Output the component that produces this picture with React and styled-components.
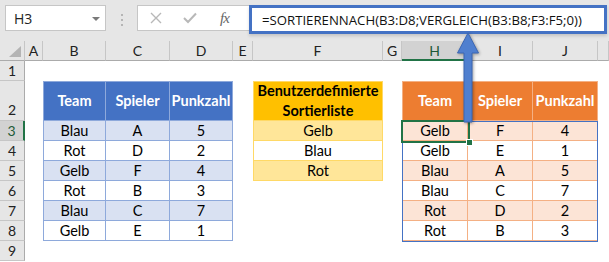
import styled, { createGlobalStyle } from "styled-components";

const GlobalStyle = createGlobalStyle`
    html, body {
        margin: 0;
        padding: 0;
        background: #ffffff;
        overflow: hidden;
    }
`;

const Page = styled.div`
    position: relative;
    width: 609px;
    height: 262px;
    overflow: hidden;
    font-family: Lato, "Liberation Sans", sans-serif;
`;

const FormulaBar = styled.div`
    height: 41px;
    box-sizing: border-box;
    padding: 5px 0 0 5px;
    background: #e6e6e6;
    display: flex;
    align-items: flex-start;
`;

const NameBox = styled.div`
    width: 101px;
    height: 26px;
    box-sizing: border-box;
    background: #fff;
    border: 1px solid #c6c6c6;
    display: flex;
    align-items: center;
    justify-content: space-between;
    padding: 0 5px 0 8px;
    font-family: "Open Sans", sans-serif;
    font-size: 14px;
    color: #222;
`;

const Caret = styled.span`
    width: 0;
    height: 0;
    border-left: 4px solid transparent;
    border-right: 4px solid transparent;
    border-top: 4px solid #7a7a7a;
    margin-top: 1px;
`;

const Dots = styled.div`
    margin: 9px 0 0 15px;
    display: flex;
    flex-direction: column;
    gap: 3px;
    span {
        width: 2px;
        height: 2px;
        background: #b5b5b5;
    }
`;

const FnBox = styled.div`
    margin-left: 14px;
    width: 112px;
    height: 26px;
    box-sizing: border-box;
    background: #fff;
    border: 1px solid #c6c6c6;
    border-right: none;
    display: flex;
    align-items: center;
    padding-left: 12px;
    gap: 21px;
`;

const Fx = styled.span`
    font-family: "Liberation Serif", serif;
    font-style: italic;
    font-size: 15px;
    color: #666;
    margin-left: 2px;
    letter-spacing: -1px;
`;

const FormulaInput = styled.div`
    width: 358px;
    height: 29px;
    box-sizing: border-box;
    border: 3px solid #4472c4;
    background: #fff;
    display: flex;
    align-items: center;
    padding-left: 10px;
    font-family: "Open Sans", sans-serif;
    font-size: 13.2px;
    color: #111;
    white-space: nowrap;
    box-shadow: 0 2px 3px rgba(0, 0, 0, 0.15);
`;

const Sheet = styled.div`
    display: grid;
    grid-template-columns: 25px 18px 63px 64px 63px 20px 130px 19px 66px 65px 65px 1fr;
    grid-template-rows: 20px 20px 40px repeat(7, 20px);
`;

const ColHead = styled.div`
    background: ${(p) => (p.$active ? "#d2d2d2" : "#e6e6e6")};
    border-right: 1px solid #c6c6c6;
    border-bottom: ${(p) => (p.$active ? "2px solid #217346" : "1px solid #ababab")};
    box-sizing: border-box;
    display: flex;
    align-items: center;
    justify-content: center;
    font-size: 14px;
    color: ${(p) => (p.$active ? "#1e5a37" : "#222")};
`;

const Corner = styled(ColHead)`
    position: relative;
    &::after {
        content: "";
        position: absolute;
        right: 3px;
        bottom: 3px;
        width: 0;
        height: 0;
        border-left: 12px solid transparent;
        border-bottom: 11px solid #b4b4b4;
    }
`;

const RowHead = styled.div`
    background: ${(p) => (p.$active ? "#d2d2d2" : "#e6e6e6")};
    border-bottom: 1px solid #c6c6c6;
    border-right: ${(p) => (p.$active ? "2px solid #217346" : "1px solid #ababab")};
    box-sizing: border-box;
    display: flex;
    align-items: ${(p) => (p.$tall ? "flex-end" : "center")};
    padding-bottom: ${(p) => (p.$tall ? "2px" : "0")};
    justify-content: center;
    font-size: 14px;
    color: ${(p) => (p.$active ? "#1e5a37" : "#222")};
`;

const Cell = styled.div`
    box-sizing: border-box;
    background: ${(p) => p.$bg || "#fff"};
    border-right: ${(p) => (p.$line ? `1px solid ${p.$line}` : "none")};
    border-bottom: ${(p) => (p.$line ? `1px solid ${p.$line}` : "none")};
    border-top: ${(p) => (p.$top ? `1px solid ${p.$line}` : "none")};
    border-left: ${(p) => (p.$left ? `1px solid ${p.$line}` : "none")};
    display: flex;
    align-items: center;
    justify-content: center;
    text-align: center;
    font-size: 14.5px;
    line-height: 20px;
    font-weight: ${(p) => (p.$head ? 700 : 400)};
    color: ${(p) => p.$color || "#000"};
`;

const Selection = styled.div`
    position: absolute;
    left: 401px;
    top: 120px;
    width: 69px;
    height: 23px;
    box-sizing: border-box;
    border: 2px solid #217346;
    &::after {
        content: "";
        position: absolute;
        right: -5px;
        bottom: -5px;
        width: 5px;
        height: 5px;
        background: #217346;
        border: 1px solid #fff;
    }
`;

const SpillFrame = styled.div`
    position: absolute;
    left: 402px;
    top: 121px;
    width: 196px;
    height: 121px;
    box-sizing: border-box;
    border: 1px solid #4472c4;
`;

const Arrow = styled.svg`
    position: absolute;
    left: 455px;
    top: 30px;
    filter: drop-shadow(1px 1px 1.5px rgba(0, 0, 0, 0.35));
`;

const COLS = ["A", "B", "C", "D", "E", "F", "G", "H", "I", "J"];

const blue = { head: "#4472c4", light: "#d9e1f2", line: "#8ea9db", text: "#fff" };
const orange = { head: "#ed7d31", light: "#fce4d6", line: "#f4b084", text: "#fff" };
const yellow = { head: "#ffc000", light: "#ffe699", line: "#ffd966", text: "#000" };

const heads = ["Team", "Spieler", "Punkzahl"];
const source = [
    ["Blau", "A", 5],
    ["Rot", "D", 2],
    ["Gelb", "F", 4],
    ["Rot", "B", 3],
    ["Blau", "C", 7],
    ["Gelb", "E", 1],
];
const sorted = [
    ["Gelb", "F", 4],
    ["Gelb", "E", 1],
    ["Blau", "A", 5],
    ["Blau", "C", 7],
    ["Rot", "D", 2],
    ["Rot", "B", 3],
];
const sortList = ["Gelb", "Blau", "Rot"];

function tableCell(theme, row, first, text) {
    const head = row === 2;
    const light = !head && (row - 3) % 2 === 0;
    return {
        text,
        $bg: head ? theme.head : light ? theme.light : "#fff",
        $line: theme.line,
        $top: head,
        $left: first,
        $head: head,
        $color: head ? theme.text : "#000",
    };
}

function cellAt(row, col) {
    if (col >= 1 && col <= 3 && row >= 2 && row <= 8) {
        const text = row === 2 ? heads[col - 1] : source[row - 3][col - 1];
        return tableCell(blue, row, col === 1, text);
    }
    if (col === 5 && row >= 2 && row <= 5) {
        const text = row === 2 ? (
            <span>
                Benutzerdefinierte
                <br />
                Sortierliste
            </span>
        ) : (
            sortList[row - 3]
        );
        return tableCell(yellow, row, true, text);
    }
    if (col >= 7 && col <= 9 && row >= 2 && row <= 8) {
        const text = row === 2 ? heads[col - 7] : sorted[row - 3][col - 7];
        return tableCell(orange, row, col === 7, text);
    }
    return null;
}

const ROWS = [1, 2, 3, 4, 5, 6, 7, 8, 9];

function Row({ row }) {
    return (
        <>
            <RowHead $active={row === 3} $tall={row === 2}>
                {row}
            </RowHead>
            {COLS.map((c, i) => {
                const cell = cellAt(row, i);
                if (!cell) return <Cell key={c} />;
                const { text, ...rest } = cell;
                return (
                    <Cell key={c} {...rest}>
                        {text}
                    </Cell>
                );
            })}
            <Cell />
        </>
    );
}

function App() {
    return (
        <Page>
            <GlobalStyle />
            <FormulaBar>
                <NameBox>
                    <span>H3</span>
                    <Caret />
                </NameBox>
                <Dots>
                    <span />
                    <span />
                    <span />
                </Dots>
                <FnBox>
                    <svg width="12" height="12" viewBox="0 0 12 12">
                        <path d="M1 1 L11 11 M11 1 L1 11" stroke="#b8b8b8" strokeWidth="1.4" fill="none" />
                    </svg>
                    <svg width="14" height="12" viewBox="0 0 14 12">
                        <path d="M1 6 L5 10 L13 1.5" stroke="#b8b8b8" strokeWidth="2" fill="none" />
                    </svg>
                    <Fx>fx</Fx>
                </FnBox>
                <FormulaInput>=SORTIERENNACH(B3:D8;VERGLEICH(B3:B8;F3:F5;0))</FormulaInput>
            </FormulaBar>
            <Sheet>
                <Corner />
                {COLS.map((c) => (
                    <ColHead key={c} $active={c === "H"}>
                        {c}
                    </ColHead>
                ))}
                <ColHead />
                {ROWS.map((r) => (
                    <Row key={r} row={r} />
                ))}
            </Sheet>
            <SpillFrame />
            <Selection />
            <Arrow width="26" height="96" viewBox="0 0 26 96">
                <path
                    d="M13 3 L23.5 23 L17 23 L17 92 L9 92 L9 23 L2.5 23 Z"
                    fill="#4f7fcf"
                    stroke="#3b66b3"
                    strokeWidth="1"
                />
            </Arrow>
        </Page>
    );
}

export default App;
